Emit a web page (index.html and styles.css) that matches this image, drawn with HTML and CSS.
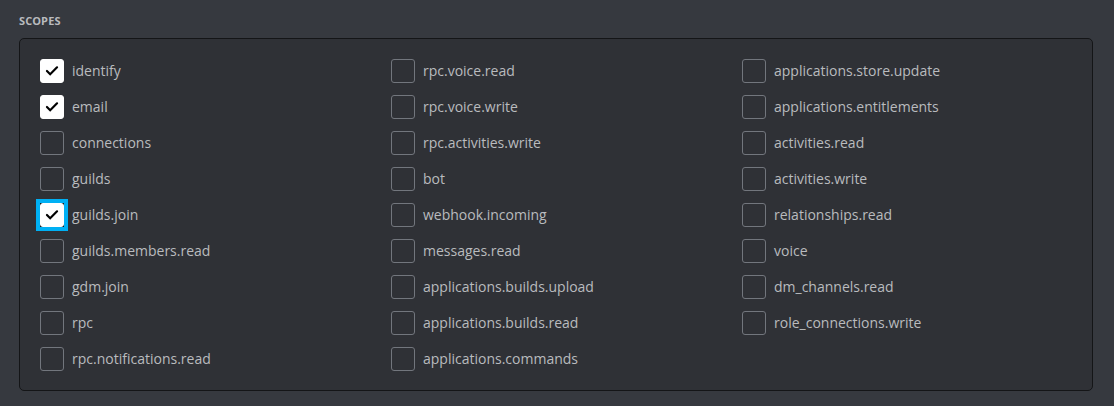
FILE: index.html
```html
<!DOCTYPE html>
<html>
<head>
<meta charset="utf-8">
<link rel="stylesheet" href="styles.css">
</head>
<body>
<div class="section">
  <h5 class="title">Scopes</h5>
  <div class="box">
    <div class="grid">
      <label class="item"><span class="cb checked"><svg viewBox="0 0 24 24"><path d="M6.5 12l3.5 3.5 7.5-7.5" /></svg></span><span class="lbl">identify</span></label>
      <label class="item"><span class="cb"></span><span class="lbl">rpc.voice.read</span></label>
      <label class="item"><span class="cb"></span><span class="lbl">applications.store.update</span></label>

      <label class="item"><span class="cb checked"><svg viewBox="0 0 24 24"><path d="M6.5 12l3.5 3.5 7.5-7.5" /></svg></span><span class="lbl">email</span></label>
      <label class="item"><span class="cb"></span><span class="lbl">rpc.voice.write</span></label>
      <label class="item"><span class="cb"></span><span class="lbl">applications.entitlements</span></label>

      <label class="item"><span class="cb"></span><span class="lbl">connections</span></label>
      <label class="item"><span class="cb"></span><span class="lbl">rpc.activities.write</span></label>
      <label class="item"><span class="cb"></span><span class="lbl">activities.read</span></label>

      <label class="item"><span class="cb"></span><span class="lbl">guilds</span></label>
      <label class="item"><span class="cb"></span><span class="lbl">bot</span></label>
      <label class="item"><span class="cb"></span><span class="lbl">activities.write</span></label>

      <label class="item"><span class="focus-ring"><span class="cb checked"><svg viewBox="0 0 24 24"><path d="M6.5 12l3.5 3.5 7.5-7.5" /></svg></span></span><span class="lbl">guilds.join</span></label>
      <label class="item"><span class="cb"></span><span class="lbl">webhook.incoming</span></label>
      <label class="item"><span class="cb"></span><span class="lbl">relationships.read</span></label>

      <label class="item"><span class="cb"></span><span class="lbl">guilds.members.read</span></label>
      <label class="item"><span class="cb"></span><span class="lbl">messages.read</span></label>
      <label class="item"><span class="cb"></span><span class="lbl">voice</span></label>

      <label class="item"><span class="cb"></span><span class="lbl">gdm.join</span></label>
      <label class="item"><span class="cb"></span><span class="lbl">applications.builds.upload</span></label>
      <label class="item"><span class="cb"></span><span class="lbl">dm_channels.read</span></label>

      <label class="item"><span class="cb"></span><span class="lbl">rpc</span></label>
      <label class="item"><span class="cb"></span><span class="lbl">applications.builds.read</span></label>
      <label class="item"><span class="cb"></span><span class="lbl">role_connections.write</span></label>

      <label class="item"><span class="cb"></span><span class="lbl">rpc.notifications.read</span></label>
      <label class="item"><span class="cb"></span><span class="lbl">applications.commands</span></label>
    </div>
  </div>
</div>
</body>
</html>
```

FILE: styles.css
```css
html, body {
  margin: 0;
  padding: 0;
  background: #36393f;
  font-family: "Open Sans", "Noto Sans", sans-serif;
}

.section {
  padding: 14px 21px 15px 19px;
}

.title {
  margin: 0 0 10px 0;
  font-size: 11px;
  line-height: 14px;
  font-weight: 700;
  text-transform: uppercase;
  color: #b9bbbe;
  letter-spacing: 0.1px;
}

.box {
  background: #2f3136;
  border: 1px solid #141517;
  border-radius: 5px;
  padding: 20px 20px 19px 20px;
}

.grid {
  display: grid;
  grid-template-columns: 351px 351px 1fr;
  row-gap: 12px;
}

.item {
  display: flex;
  align-items: center;
  height: 24px;
}

.focus-ring {
  flex: none;
  display: flex;
  padding: 4px;
  margin: -4px;
  background: #1a1b1e;
  box-shadow: inset 0 0 0 4px #00b0f4;
}

.cb {
  box-sizing: border-box;
  width: 24px;
  height: 24px;
  border: 1px solid #72767d;
  border-radius: 3px;
  flex: none;
  display: flex;
  align-items: center;
  justify-content: center;
}

.cb.checked {
  background: #ffffff;
  border-color: #ffffff;
}

.cb svg {
  width: 24px;
  height: 24px;
}

.cb svg path {
  fill: none;
  stroke: #000000;
  stroke-width: 2.4;
  stroke-linecap: round;
  stroke-linejoin: miter;
}

.lbl {
  margin-left: 8px;
  font-size: 14px;
  color: #b9bbbe;
  line-height: 18px;
  white-space: nowrap;
}
```
